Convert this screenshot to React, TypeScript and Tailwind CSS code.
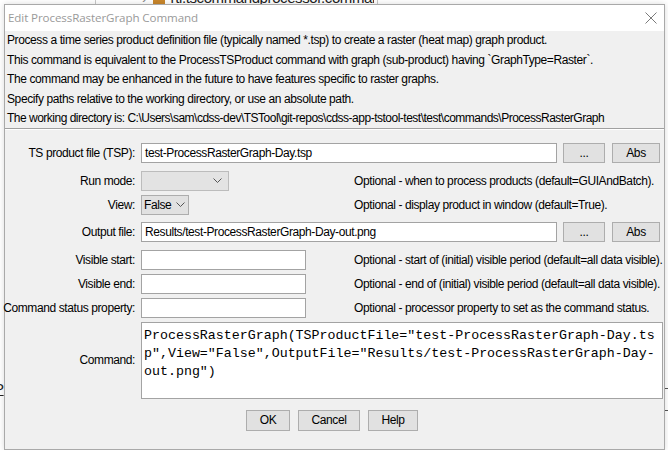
import React from "react";

function Label({ children }: { children: React.ReactNode }) {
  return <div className="w-[130px] shrink-0 flex justify-end whitespace-nowrap">{children}</div>;
}

function TextBox({ value = "", width }: { value?: string; width: string }) {
  return (
    <div className={`${width} h-[20px] shrink-0 bg-white border border-[#a3a3a3] px-[3px] leading-[18px] whitespace-nowrap overflow-hidden`}>
      {value}
    </div>
  );
}

function Btn({ label, width }: { label: string; width: string }) {
  return (
    <div className={`${width} h-full shrink-0 bg-[#e1e1e1] border border-[#adadad] flex items-center justify-center`}>
      {label}
    </div>
  );
}

function Chevron() {
  return (
    <svg width="9" height="5" viewBox="0 0 9 5" className="shrink-0">
      <path d="M0.5 0.5 L4.5 4.5 L8.5 0.5" fill="none" stroke="#555" strokeWidth="1" />
    </svg>
  );
}

export default function App() {
  return (
    <div className="relative w-[668px] h-[450px] overflow-hidden bg-white font-['Liberation_Sans',Arial,sans-serif] text-[12px] tracking-[-0.4px] text-black">
      {/* window behind the dialog */}
      <div className="absolute left-0 top-0 w-[668px] h-[450px]">
        <div className="absolute left-[95px] top-0 w-px h-[6px] bg-[#c8c8c8]" />
        <div className="absolute left-[377px] top-0 w-px h-[6px] bg-[#c8c8c8]" />
        <div className="absolute left-[142px] top-[-13px] w-[232px] overflow-hidden flex items-center gap-[6px] text-[15px] text-[#222] whitespace-nowrap">
          <span className="text-[#888]">›</span>
          <span className="w-[12px] h-[12px] shrink-0 bg-[#c9872c]" />
          <span>rti.tscommandprocessor.commands</span>
        </div>
        <div className="absolute left-[-6px] top-[378px] text-[15px] text-[#222] underline">P</div>
        <div className="absolute left-[664px] top-[388px] w-[4px] h-px bg-[#555]" />
        <div className="absolute left-[664px] top-[410px] w-[4px] h-px bg-[#555]" />
      </div>

      {/* dialog */}
      <div className="absolute left-[4px] top-[4px] w-[661px] h-[446px] border border-[#a9a9a9] bg-[#f0f0f0] flex flex-col shadow-[0_0_6px_rgba(0,0,0,0.15)]">
        <div className="h-[26px] bg-white flex items-center justify-between pl-[3px] pr-[7px] shrink-0">
          <span className="text-[11.6px] text-[#9a9a9a] font-['Open_Sans',sans-serif] tracking-[-0.1px]">Edit ProcessRasterGraph Command</span>
          <svg width="12" height="12" viewBox="0 0 12 12">
            <path d="M0.5 0.5 L11.5 11.5 M11.5 0.5 L0.5 11.5" stroke="#7a7a7a" strokeWidth="1" />
          </svg>
        </div>

        <div className="pl-[2px] leading-[19.5px] whitespace-nowrap shrink-0">
          <div>Process a time series product definition file (typically named *.tsp) to create a raster (heat map) graph product.</div>
          <div>This command is equivalent to the ProcessTSProduct command with graph (sub-product) having `GraphType=Raster`.</div>
          <div>The command may be enhanced in the future to have features specific to raster graphs.</div>
          <div>Specify paths relative to the working directory, or use an absolute path.</div>
          <div className="tracking-[-0.5px]">The working directory is: C:\Users\sam\cdss-dev\TSTool\git-repos\cdss-app-tstool-test\test\commands\ProcessRasterGraph</div>
        </div>

        <div className="h-px bg-[#a0a0a0] mt-[-1px] shrink-0" />
        <div className="h-px bg-white shrink-0" />

        <div className="flex flex-col shrink-0 whitespace-nowrap">
          <div className="flex items-center h-[20px] mt-[13px] gap-[6px] shrink-0">
            <Label>TS product file (TSP):</Label>
            <TextBox value="test-ProcessRasterGraph-Day.tsp" width="w-[416px]" />
            <div className="flex gap-[7px] h-[20px]">
              <Btn label="..." width="w-[42px]" />
              <Btn label="Abs" width="w-[48px]" />
            </div>
          </div>

          <div className="flex items-center h-[20px] mt-[8px] shrink-0">
            <Label>Run mode:</Label>
            <div className="ml-[6px] w-[88px] h-[20px] shrink-0 bg-[#e3e3e3] border border-[#bcbcbc] flex items-center justify-end pr-[6px]">
              <Chevron />
            </div>
            <div className="ml-[125px]">Optional - when to process products (default=GUIAndBatch).</div>
          </div>

          <div className="flex items-center h-[20px] mt-[4px] shrink-0">
            <Label>View:</Label>
            <div className="ml-[6px] w-[48px] h-[20px] shrink-0 bg-[#e1e1e1] border border-[#adadad] flex items-center gap-[5px] pl-[2px]">
              <span>False</span>
              <Chevron />
            </div>
            <div className="ml-[165px]">Optional - display product in window (default=True).</div>
          </div>

          <div className="flex items-center h-[20px] mt-[7px] gap-[6px] shrink-0">
            <Label>Output file:</Label>
            <TextBox value="Results/test-ProcessRasterGraph-Day-out.png" width="w-[416px]" />
            <div className="flex gap-[7px] h-[20px]">
              <Btn label="..." width="w-[42px]" />
              <Btn label="Abs" width="w-[48px]" />
            </div>
          </div>

          <div className="flex items-center h-[20px] mt-[8px] shrink-0">
            <Label>Visible start:</Label>
            <div className="ml-[6px]"><TextBox width="w-[165px]" /></div>
            <div className="ml-[48px]">Optional - start of (initial) visible period (default=all data visible).</div>
          </div>

          <div className="flex items-center h-[20px] mt-[4px] shrink-0">
            <Label>Visible end:</Label>
            <div className="ml-[6px]"><TextBox width="w-[165px]" /></div>
            <div className="ml-[48px]">Optional - end of (initial) visible period (default=all data visible).</div>
          </div>

          <div className="flex items-center h-[20px] mt-[4px] shrink-0">
            <Label>Command status property:</Label>
            <div className="ml-[6px]"><TextBox width="w-[165px]" /></div>
            <div className="ml-[48px]">Optional - processor property to set as the command status.</div>
          </div>

          <div className="flex items-center h-[77px] mt-[4px] shrink-0">
            <Label>Command:</Label>
            <div className="ml-[6px] w-[522px] h-[77px] shrink-0 bg-white border border-[#a3a3a3] pl-[2px] pt-[4px] font-['Liberation_Mono','Courier_New',monospace] text-[13.3px] tracking-normal leading-[18px] whitespace-pre">
              <div>ProcessRasterGraph(TSProductFile="test-ProcessRasterGraph-Day.ts</div>
              <div>p",View="False",OutputFile="Results/test-ProcessRasterGraph-Day-</div>
              <div>out.png")</div>
            </div>
          </div>

          <div className="flex justify-center gap-[8px] h-[21px] mt-[11px] ml-[-5px] shrink-0">
            <Btn label="OK" width="w-[44px]" />
            <Btn label="Cancel" width="w-[62px]" />
            <Btn label="Help" width="w-[50px]" />
          </div>
        </div>
      </div>
    </div>
  );
}
